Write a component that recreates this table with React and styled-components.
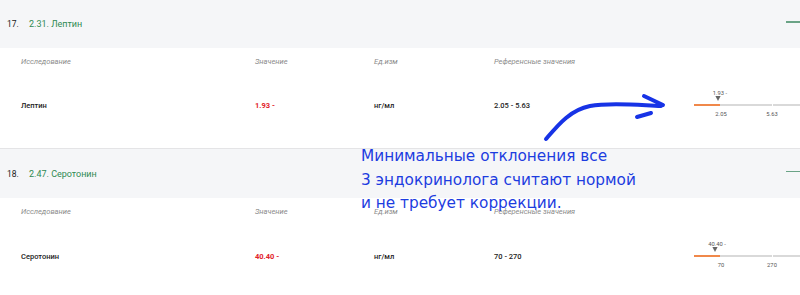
import React from "react";
import styled, { createGlobalStyle } from "styled-components";

const Global = createGlobalStyle`
  html, body { margin: 0; padding: 0; background: #fff; }
  body { font-family: Roboto, "Liberation Sans", sans-serif; }
`;

const Page = styled.div`
  position: relative;
  width: 800px;
  height: 295px;
  overflow: hidden;
  background: #fff;
`;

const Section = styled.section`
  padding-bottom: ${(p) => p.$pb}px;
  border-bottom: 1px solid #e4e4e6;
`;

const Header = styled.div`
  display: flex;
  align-items: center;
  height: ${(p) => p.$h}px;
  padding-left: 7px;
  background: #f5f6f8;
`;

const Num = styled.span`
  width: 22px;
  font-size: 8.5px;
  color: #222;
`;

const Title = styled.span`
  font-size: 9px;
  color: #2f8a52;
`;

const Accent = styled.span`
  margin-left: auto;
  width: 14px;
  height: 1.5px;
  background: #6aa386;
  margin-top: -4px;
`;

const Grid = styled.div`
  display: grid;
  grid-template-columns: 234px 119px 120px 200px 1fr;
  align-items: center;
  padding-left: 21px;
  height: ${(p) => p.$h}px;
`;

const ColHead = styled.span`
  font-size: 7.5px;
  font-style: italic;
  color: #8c8c8c;
`;

const Cell = styled.span`
  font-size: 7.5px;
  font-weight: ${(p) => (p.$bold ? 700 : 500)};
  color: ${(p) => (p.$red ? "#e2232b" : "#222")};
`;

const Note = styled.div`
  position: absolute;
  left: 361px;
  top: 145px;
  font-family: "DejaVu Sans", Verdana, sans-serif;
  font-size: 15.3px;
  line-height: 23.5px;
  color: #1c3ce0;
  white-space: nowrap;
`;

const Arrow = styled.svg`
  position: absolute;
  left: 530px;
  top: 85px;
`;

function RangeChart({ value, marker, low, high }) {
  return (
    <svg width="106" height="40" viewBox="0 0 106 40" style={{ display: "block" }}>
      <text x={marker + 2} y="9.5" fontSize="5.8" fill="#555" textAnchor="middle" fontFamily="Roboto, sans-serif">
        {value} -
      </text>
      <polygon points={`${marker - 2.6},11 ${marker + 2.6},11 ${marker},16`} fill="#666" />
      <rect x="0" y="19" width="26" height="2" fill="#f0884a" />
      <rect x="26" y="19" width="52" height="2" fill="#d9d9d9" />
      <rect x="79" y="19" width="27" height="2" fill="#d9d9d9" />
      <text x="27" y="30.5" fontSize="5.8" fill="#555" textAnchor="middle" fontFamily="Roboto, sans-serif">
        {low}
      </text>
      <text x="78" y="30.5" fontSize="5.8" fill="#555" textAnchor="middle" fontFamily="Roboto, sans-serif">
        {high}
      </text>
    </svg>
  );
}

const rows = [
  { num: "17.", title: "2.31. Лептин", name: "Лептин", value: "1.93", unit: "нг/мл", ref: "2.05 - 5.63", low: "2.05", high: "5.63", marker: 24, headH: 48, colH: 27, rowH: 60, pb: 13 },
  { num: "18.", title: "2.47. Серотонин", name: "Серотонин", value: "40.40", unit: "нг/мл", ref: "70 - 270", low: "70", high: "270", marker: 21, headH: 49, colH: 27, rowH: 62, pb: 40 },
];

export default function App() {
  return (
    <Page>
      <Global />
      {rows.map((r) => (
        <Section key={r.num} $pb={r.pb}>
          <Header $h={r.headH}>
            <Num>{r.num}</Num>
            <Title>{r.title}</Title>
            <Accent />
          </Header>
          <Grid $h={r.colH}>
            <ColHead>Исследование</ColHead>
            <ColHead>Значение</ColHead>
            <ColHead>Ед.изм</ColHead>
            <ColHead>Референсные значения</ColHead>
            <span />
          </Grid>
          <Grid $h={r.rowH}>
            <Cell>{r.name}</Cell>
            <Cell $red $bold>{r.value} -</Cell>
            <Cell>{r.unit}</Cell>
            <Cell>{r.ref}</Cell>
            <RangeChart value={r.value} marker={r.marker} low={r.low} high={r.high} />
          </Grid>
        </Section>
      ))}
      <Arrow width="140" height="65" viewBox="0 0 140 65">
        <path
          d="M16 54 C 28 40, 40 25, 60 21 C 80 17, 108 20, 131 21 M 114 11 L 133 20 M 107 32 L 121 28"
          fill="none"
          stroke="#1733e6"
          strokeWidth="4"
          strokeLinecap="round"
          strokeLinejoin="round"
        />
      </Arrow>
      <Note>
        Минимальные отклонения все
        <br />3 эндокринолога считают нормой
        <br />и не требует коррекции.
      </Note>
    </Page>
  );
}
